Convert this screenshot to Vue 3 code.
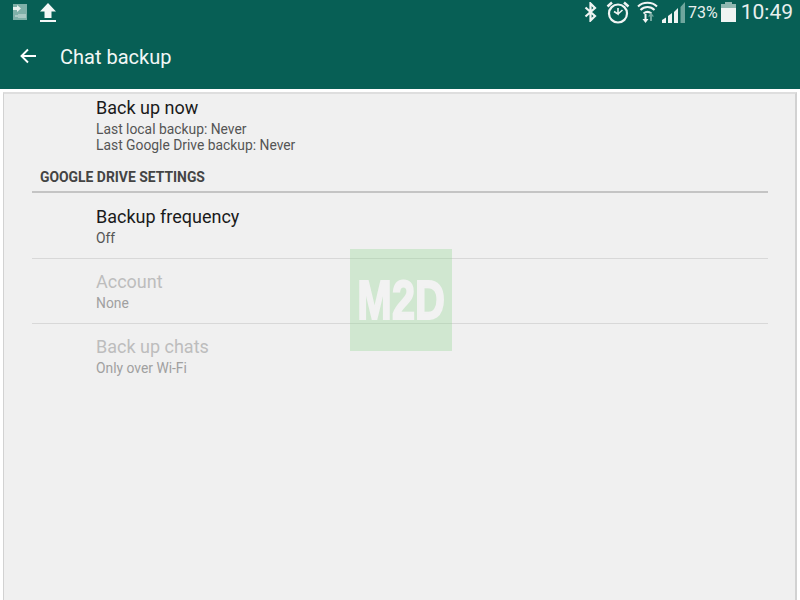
<template>
  <div class="page">
    <header class="appbar">
      <div class="status">
        <div class="status-left">
          <svg class="ic-sd" width="14" height="16" viewBox="0 0 14 16">
            <path d="M0 0H14V16H0Z" fill="#7fb0a8"/>
            <path d="M0 3H4V1L8 4.500L4 8V6H0Z" fill="#e8f0ee"/>
            <path d="M2 12H5M6 10V14M8 10V14M10 10V14M12 10V14" stroke="#e8f0ee" stroke-width="1" fill="none" opacity=".8"/>
          </svg>
          <svg class="ic-up" width="16" height="19" viewBox="0 0 16 19">
            <path d="M8 0L16 8.500H11.500V15H4.500V8.500H0Z" fill="#f4f7f6"/>
            <rect x="0" y="17" width="16" height="2" fill="#f4f7f6"/>
          </svg>
        </div>
        <div class="status-right">
          <svg class="ic-bt" width="13" height="20" viewBox="0 0 13 20">
            <path d="M1.500 5.500L11 14L6.500 18.500V1.500L11 6L1.500 14.500" fill="none" stroke="#f0f4f3" stroke-width="2.200"/>
          </svg>
          <svg class="ic-alarm" width="24" height="23" viewBox="0 0 24 23">
            <circle cx="12" cy="12.500" r="9" fill="none" stroke="#f0f4f3" stroke-width="2.200"/>
            <path d="M12 7V13L8 10.500M12 13L16.500 9" fill="none" stroke="#f0f4f3" stroke-width="1.600"/>
            <path d="M1.500 5.500L6 1.500M18 1.500L22.500 5.500" stroke="#f0f4f3" stroke-width="2.500" fill="none"/>
          </svg>
          <svg class="ic-wifi" width="21" height="22" viewBox="0 0 21 22">
            <path d="M1 5.500C6 0.500 15 0.500 20 5.500" fill="none" stroke="#f0f4f3" stroke-width="2"/>
            <path d="M3.500 9C7.500 5 13.500 5 17.500 9" fill="none" stroke="#f0f4f3" stroke-width="2"/>
            <path d="M6.500 12.500C9 10.500 12 10.500 14.500 12.500" fill="none" stroke="#f0f4f3" stroke-width="2"/>
            <path d="M7.500 13V18H5.500L8.500 22L11.500 18H9.500V13Z" fill="#f0f4f3"/>
            <path d="M14 11.500L17 15.500H15V20H13V15.500H11Z" fill="#6fa69d"/>
          </svg>
          <svg class="ic-signal" width="23" height="21" viewBox="0 0 23 21">
            <path d="M0 18L4 15.500V21H0Z" fill="#f0f4f3"/>
            <path d="M6 14L10 11V21H6Z" fill="#f0f4f3"/>
            <path d="M12 10L16 6V21H12Z" fill="#f0f4f3"/>
            <path d="M18.500 5L23 0V21H18.500Z" fill="#6fa69d"/>
          </svg>
          <span class="pct">73%</span>
          <svg class="ic-batt" width="15" height="20" viewBox="0 0 15 20">
            <rect x="4" y="0" width="7" height="2" fill="#8fb8b1"/>
            <rect x="0" y="2" width="15" height="4" fill="#8fb8b1"/>
            <rect x="0" y="6" width="15" height="14" fill="#f0f4f3"/>
          </svg>
          <span class="clock">10:49</span>
        </div>
      </div>
      <div class="toolbar">
        <svg class="ic-back" width="16" height="16" viewBox="0 0 16 16">
          <path d="M16 8H2M8 1.500L1.500 8L8 14.500" fill="none" stroke="#fff" stroke-width="1.900"/>
        </svg>
        <span class="title">Chat backup</span>
      </div>
    </header>
    <main class="card">
      <section class="item first">
        <div class="item-title">Back up now</div>
        <div class="item-sub">Last local backup: Never</div>
        <div class="item-sub">Last Google Drive backup: Never</div>
      </section>
      <div class="category">GOOGLE DRIVE SETTINGS</div>
      <section v-for="(row, i) in rows" :key="row.title" class="item row" :class="{ disabled: row.disabled, divided: i < rows.length - 1 }">
        <div class="item-title">{{ row.title }}</div>
        <div class="item-sub">{{ row.sub }}</div>
      </section>
      <div class="mark"><span>M2D</span></div>
    </main>
  </div>
</template>

<script setup>
const rows = [
  { title: 'Backup frequency', sub: 'Off', disabled: false },
  { title: 'Account', sub: 'None', disabled: true },
  { title: 'Back up chats', sub: 'Only over Wi-Fi', disabled: true }
]
</script>

<style>
html, body { margin: 0; background: #fff; overflow: hidden; }
</style>

<style scoped>
.page { width: 800px; height: 600px; display: flex; flex-direction: column; font-family: Roboto, sans-serif; overflow: hidden; background: #fff; }
.appbar { height: 89px; flex: none; background: #075f55; color: #fff; }
.status { height: 24px; display: flex; justify-content: space-between; align-items: center; padding: 0 7px 0 13px; }
.status-left { display: flex; align-items: flex-start; gap: 13px; height: 24px; }
.ic-sd { margin-top: 4px; }
.ic-up { margin-top: 3px; }
.status-right { display: flex; align-items: center; height: 24px; }
.ic-bt { margin-right: 9px; margin-top: -1px; }
.ic-alarm { margin-right: 7px; }
.ic-wifi { margin-right: 4px; }
.ic-signal { margin-right: 3px; }
.pct { font-size: 16px; color: #e8efee; margin-right: 3px; }
.ic-batt { margin-right: 5px; }
.clock { font-size: 21px; color: #e8efee; }
.toolbar { height: 65px; display: flex; align-items: center; padding-left: 20px; }
.ic-back { margin-right: 24px; margin-top: -1px; }
.title { font-size: 20px; color: #f2f7f6; }
.card { position: relative; flex: 1; margin: 3px 3px 0; background: #f0f0f0; border: 1px solid #d2d2d2; border-width: 2px 2px 0 1px; border-top-color: #dedede; padding: 0 27px 0 28px; }
.item { padding-left: 64px; }
.first { padding-top: 2px; }
.first .item-title, .row .item-title { margin-bottom: 1px; }
.item-title { font-size: 18px; line-height: 24px; color: #1a1a1a; }
.item-sub { font-size: 13.85px; line-height: 16px; color: #555; }
.category { margin-top: 7px; margin-bottom: 1px; height: 33px; line-height: 34px; padding-left: 8px; font-size: 13.9px; font-weight: 700; color: #444; border-bottom: 2px solid #c4c4c4; box-sizing: border-box; }
.row { height: 65px; box-sizing: border-box; padding-top: 11px; }
.divided { border-bottom: 1px solid #d8d8d8; }
.disabled .item-title { color: #bdbdbd; }
.disabled .item-sub { color: #a0a0a0; }
.mark { position: absolute; left: 346px; top: 155px; width: 102px; height: 102px; background: rgba(150, 215, 150, .35); display: flex; align-items: center; justify-content: center; overflow: hidden; }
.mark span { font-family: "Liberation Sans", sans-serif; font-weight: 700; font-size: 56px; line-height: 56px; color: #f2f2f2; transform: scaleX(.74); -webkit-text-stroke: 2px #f2f2f2; }
</style>
